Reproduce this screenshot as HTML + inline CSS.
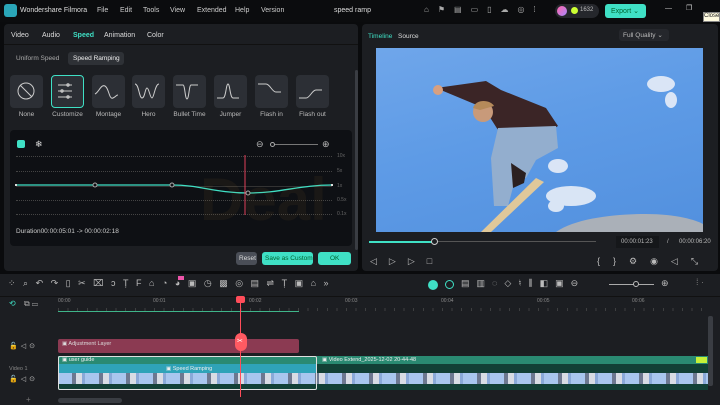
<!DOCTYPE html>
<html><head><meta charset="utf-8"><style>
*{box-sizing:border-box;margin:0;padding:0}
body{width:720px;height:405px;overflow:hidden;background:#0a0b0d;font-family:"Liberation Sans",sans-serif;color:#ddd;font-size:7px;position:relative}
.a{position:absolute}
.t{position:absolute;white-space:nowrap}
.tile{position:absolute;top:75px;width:33px;height:33px;background:#2c2f35;border-radius:4px}
.lbl{position:absolute;top:111px;width:41px;text-align:center;font-size:6.5px;color:#bbb}
.gl{position:absolute;left:16px;width:316px;border-top:1px dotted #444}
</style></head><body>
<!-- title bar -->
<div class="a" style="left:0;top:0;width:720px;height:22px;background:#0b0c0e"></div>
<div class="a" style="left:4px;top:4px;width:13px;height:13px;background:#2aa6b8;border-radius:3px"></div>
<div class="t" style="left:20px;top:7px;color:#ddd">Wondershare Filmora</div>
<div class="t" style="left:97px;top:7px;color:#ccc">File</div>
<div class="t" style="left:120px;top:7px;color:#ccc">Edit</div>
<div class="t" style="left:143px;top:7px;color:#ccc">Tools</div>
<div class="t" style="left:170px;top:7px;color:#ccc">View</div>
<div class="t" style="left:197px;top:7px;color:#ccc">Extended</div>
<div class="t" style="left:235px;top:7px;color:#ccc">Help</div>
<div class="t" style="left:261px;top:7px;color:#ccc">Version</div>
<div class="t" style="left:334px;top:7px;color:#ddd">speed ramp</div>
<div class="a" style="left:555px;top:4px;width:44px;height:14px;background:#25272c;border-radius:7px"></div>
<div class="a" style="left:557px;top:6px;width:10px;height:10px;background:linear-gradient(135deg,#f6a,#a8f);border-radius:50%"></div>
<div class="a" style="left:571px;top:7px;width:7px;height:7px;background:#cf3;border-radius:50%"></div>
<div class="t" style="left:580px;top:7px;font-size:6px;color:#bbb">1632</div>
<div class="a" style="left:605px;top:4px;width:41px;height:14px;background:#3fe0c5;border-radius:3px"></div>
<div class="t" style="left:611px;top:7px;color:#063;font-size:7px">Export  ⌄</div>
<div class="t" style="left:665px;top:5px;color:#ccc">—</div>
<div class="t" style="left:686px;top:4px;color:#ccc">❐</div>
<div class="a" style="left:703px;top:12px;width:17px;height:10px;background:#fffbe0;border:1px solid #888"></div>
<div class="t" style="left:704px;top:13px;color:#222;font-size:6px">Close</div>
<div class="t" style="left:424px;top:5px;color:#aaa;font-size:8px;letter-spacing:9px">⌂⚑▤▭▯☁◎⁞</div>

<!-- left panel -->
<div class="a" style="left:4px;top:24px;width:354px;height:247px;background:#1c1e22;border-radius:4px"></div>
<div class="a" style="left:4px;top:44px;width:354px;height:1px;background:#111"></div>
<div class="t" style="left:11px;top:32px;color:#ddd">Video</div>
<div class="t" style="left:42px;top:32px;color:#ddd">Audio</div>
<div class="t" style="left:73px;top:32px;color:#3fe0c5;font-weight:bold">Speed</div>
<div class="t" style="left:104px;top:32px;color:#ddd">Animation</div>
<div class="t" style="left:147px;top:32px;color:#ddd">Color</div>
<div class="t" style="left:16px;top:55px;color:#aaa;font-size:6.5px">Uniform Speed</div>
<div class="a" style="left:68px;top:52px;width:56px;height:13px;background:#2e3136;border-radius:3px"></div>
<div class="t" style="left:73px;top:55px;color:#eee;font-size:6.5px">Speed Ramping</div>
<div class="tile" style="left:10px"></div><div class="tile" style="left:51px;border:1px solid #3fe0c5"></div>
<div class="tile" style="left:92px"></div><div class="tile" style="left:132px"></div><div class="tile" style="left:173px"></div>
<div class="tile" style="left:214px"></div><div class="tile" style="left:255px"></div><div class="tile" style="left:296px"></div>
<svg class="a" style="left:0;top:70px" width="360" height="45" fill="none" stroke="#ccc" stroke-width="1">
<circle cx="26" cy="21" r="8"/><line x1="20" y1="15" x2="32" y2="27"/>
<path d="M58 15h14M58 21h14M58 27h14"/><circle cx="68" cy="15" r="1.2"/><circle cx="62" cy="21" r="1.2"/><circle cx="68" cy="27" r="1.2"/>
<path d="M95 24c4-2 6-10 10-8s4 14 8 12 3-3 5-3"/>
<path d="M135 14c4 0 4 14 7 14s3-10 5-10 3 10 5 10 3-14 7-14"/>
<path d="M176 15h7c2 0 2 14 4 14s2-14 4-14h7"/>
<path d="M217 28h6c3 0 3-14 5-14s2 14 5 14h6"/>
<path d="M258 14h8c4 0 6 8 10 8h5"/>
<path d="M299 28h7c4 0 6-8 10-8h6"/>
</svg>
<div class="lbl" style="left:6px">None</div><div class="lbl" style="left:47px">Customize</div><div class="lbl" style="left:88px">Montage</div><div class="lbl" style="left:128px">Hero</div><div class="lbl" style="left:169px">Bullet Time</div><div class="lbl" style="left:210px">Jumper</div><div class="lbl" style="left:251px">Flash in</div><div class="lbl" style="left:292px">Flash out</div>
<div class="a" style="left:355px;top:70px;width:3px;height:180px;background:#3a3d43;border-radius:2px"></div>

<!-- graph -->
<div class="a" style="left:10px;top:130px;width:342px;height:116px;background:#0e1014;border-radius:4px"></div>
<div class="a" style="left:17px;top:140px;width:8px;height:8px;background:#3fe0c5;border-radius:2px"></div>
<div class="t" style="left:35px;top:139px;color:#ddd;font-size:9px">❄</div>
<div class="t" style="left:256px;top:139px;color:#bbb;font-size:9px">⊖</div>
<div class="a" style="left:272px;top:144px;width:46px;height:1px;background:#777"></div>
<div class="a" style="left:270px;top:142px;width:5px;height:5px;border:1px solid #aaa;border-radius:50%;background:#0e1014"></div>
<div class="t" style="left:322px;top:139px;color:#bbb;font-size:9px">⊕</div>
<div class="gl" style="top:156px"></div><div class="gl" style="top:171px"></div><div class="gl" style="top:186px;border-top:1px solid #333"></div><div class="gl" style="top:200px"></div><div class="gl" style="top:214px"></div>
<div class="t" style="left:337px;top:153px;font-size:5px;color:#666">10x</div>
<div class="t" style="left:337px;top:168px;font-size:5px;color:#666">5x</div>
<div class="t" style="left:337px;top:183px;font-size:5px;color:#666">1x</div>
<div class="t" style="left:337px;top:197px;font-size:5px;color:#666">0.5x</div>
<div class="t" style="left:337px;top:211px;font-size:5px;color:#666">0.1x</div>
<svg class="a" style="left:0;top:130px" width="360" height="100" fill="#0e1014">
<path d="M16 55H172C200 55 215 63 248 63S300 55 332 55" stroke="#3fe0c5" stroke-width="1.3" fill="none"/>
<line x1="245" y1="25" x2="245" y2="85" stroke="#e0405a" stroke-width="1"/>
<circle cx="95" cy="55" r="2" stroke="#aaa"/><circle cx="172" cy="55" r="2" stroke="#aaa"/><circle cx="248" cy="63" r="2" stroke="#aaa"/>
<rect x="15" y="54" width="2" height="2" fill="#ddd"/><rect x="331" y="54" width="2" height="2" fill="#ddd"/>
</svg>
<div class="t" style="left:200px;top:165px;font-size:60px;font-weight:bold;color:rgba(150,110,40,.09)">Deal</div>
<div class="t" style="left:16px;top:228px;color:#ccc;font-size:6.5px">Duration00:00:05:01 -&gt; 00:00:02:18</div>
<div class="a" style="left:236px;top:252px;width:21px;height:13px;background:#4a4e57;border-radius:3px"></div>
<div class="t" style="left:239px;top:255px;font-size:6.5px;color:#ddd">Reset</div>
<div class="a" style="left:262px;top:252px;width:51px;height:13px;background:#3fe0c5;border-radius:3px"></div>
<div class="t" style="left:265px;top:255px;font-size:6.5px;color:#063">Save as Custom</div>
<div class="a" style="left:318px;top:252px;width:33px;height:13px;background:#3fe0c5;border-radius:3px"></div>
<div class="t" style="left:330px;top:255px;font-size:6.5px;color:#063">OK</div>

<!-- right panel -->
<div class="a" style="left:362px;top:24px;width:356px;height:247px;background:#1c1e22;border-radius:4px"></div>
<div class="t" style="left:368px;top:33px;color:#3fe0c5;font-size:6.5px">Timeline</div>
<div class="t" style="left:398px;top:33px;color:#ddd;font-size:6.5px">Source</div>
<div class="a" style="left:619px;top:29px;width:50px;height:12px;background:#25272c;border-radius:3px"></div>
<div class="t" style="left:623px;top:31px;color:#bbb;font-size:6.5px">Full Quality ⌄</div>
<div class="a" style="left:376px;top:48px;width:327px;height:184px;background:linear-gradient(165deg,#6fa6ea 0%,#5e9be6 45%,#5290de 100%)"></div>
<svg class="a" style="left:376px;top:48px" width="327" height="184">
<path d="M180 184C200 170 240 166 270 166S320 172 327 176V184Z" fill="#aab0b8"/>
<g fill="#e8eef8" opacity=".9"><ellipse cx="285" cy="36" rx="14" ry="8"/><ellipse cx="295" cy="52" rx="6" ry="8"/><ellipse cx="195" cy="148" rx="25" ry="10"/><ellipse cx="180" cy="158" rx="8" ry="6"/><ellipse cx="182" cy="118" rx="10" ry="7"/></g>
<path d="M60 40L110 33L125 42L170 60L182 78L175 82L122 82L108 60Z" fill="#3b2526"/>
<path d="M122 80L180 78L182 100L160 112L150 130L140 128L132 158L118 158L115 110Z" fill="#93aece"/>
<path d="M135 115L150 125L148 135L137 140Z" fill="#2b2020"/>
<circle cx="107" cy="64" r="10" fill="#c89a7a"/>
<path d="M97 60C100 50 115 52 118 58L104 62Z" fill="#b58a5a"/>
<circle cx="62" cy="42" r="5" fill="#d8a080"/>
<path d="M105 184L160 130L168 134L115 184Z" fill="#e0c89a"/>
</svg>
<div class="a" style="left:369px;top:241px;width:66px;height:2px;background:#3fe0c5"></div>
<div class="a" style="left:435px;top:241px;width:161px;height:1px;background:#555"></div>
<div class="a" style="left:431px;top:238px;width:7px;height:7px;border:1px solid #ccc;border-radius:50%;background:#1c1e22"></div>
<div class="a" style="left:616px;top:236px;width:43px;height:12px;background:#15171a"></div>
<div class="t" style="left:621px;top:239px;font-size:6px;color:#bbb">00:00:01:23</div>
<div class="t" style="left:667px;top:239px;font-size:6px;color:#bbb">/</div>
<div class="t" style="left:679px;top:239px;font-size:6px;color:#bbb">00:00:06:20</div>
<div class="t" style="left:370px;top:256px;font-size:9px;color:#bbb;letter-spacing:12px">◁▷▷□</div>
<div class="t" style="left:597px;top:256px;font-size:9px;color:#bbb;letter-spacing:13px">{}⚙◉◁⤡</div>

<!-- timeline -->
<div class="a" style="left:0;top:274px;width:720px;height:131px;background:#1c1e22"></div>
<div class="a" style="left:0;top:296px;width:720px;height:1px;background:#111"></div>
<div class="t" style="left:8px;top:278px;font-size:9px;color:#bbb;letter-spacing:7.5px">⁘⌕↶↷▯✂⌧ↄȚF⌂◔◕▣◷▩◎▤⇌Ț▣⌂»</div>
<div class="a" style="left:178px;top:276px;width:6px;height:4px;background:#e5a"></div>
<div class="a" style="left:428px;top:280px;width:10px;height:10px;border-radius:50%;background:#3fe0c5"></div>
<div class="a" style="left:445px;top:280px;width:9px;height:9px;border-radius:50%;border:1px solid #3fe0c5"></div>
<div class="t" style="left:461px;top:278px;font-size:9px;color:#bbb;letter-spacing:7px">▤▥◌◇♮⫼◧▣⊖</div>
<div class="a" style="left:609px;top:284px;width:45px;height:1px;background:#aaa"></div>
<div class="a" style="left:633px;top:281px;width:6px;height:6px;border:1px solid #bbb;border-radius:50%;background:#1c1e22"></div>
<div class="t" style="left:661px;top:278px;font-size:9px;color:#bbb">⊕</div>
<div class="t" style="left:696px;top:277px;font-size:9px;color:#777">⁞ ·</div>
<div class="t" style="left:9px;top:299px;font-size:8px;color:#3fe0c5">⟲</div>
<div class="t" style="left:24px;top:299px;font-size:8px;color:#aaa">⧉ ▭</div>
<div class="a" style="left:58px;top:297px;width:650px;height:16px;background:repeating-linear-gradient(90deg,#555 0 1px,transparent 1px 9.6px);opacity:.6;clip-path:inset(11px 0 2px 0)"></div>
<div class="t" style="left:58px;top:298px;font-size:5px;color:#888">00:00</div>
<div class="t" style="left:153px;top:298px;font-size:5px;color:#888">00:01</div>
<div class="t" style="left:249px;top:298px;font-size:5px;color:#888">00:02</div>
<div class="t" style="left:345px;top:298px;font-size:5px;color:#888">00:03</div>
<div class="t" style="left:441px;top:298px;font-size:5px;color:#888">00:04</div>
<div class="t" style="left:537px;top:298px;font-size:5px;color:#888">00:05</div>
<div class="t" style="left:632px;top:298px;font-size:5px;color:#888">00:06</div>
<div class="a" style="left:58px;top:311px;width:241px;height:1px;background:#3fb58a"></div>
<div class="a" style="left:708px;top:316px;width:5px;height:70px;background:#3a3d43;border-radius:2px"></div>
<div class="a" style="left:58px;top:339px;width:241px;height:14px;background:#8b3a52;border-radius:2px"></div>
<div class="t" style="left:62px;top:341px;font-size:5.5px;color:#ddd">▣ Adjustment Layer</div>
<div class="t" style="left:9px;top:342px;font-size:7px;color:#bbb;letter-spacing:3px">🔓◁⊙</div>
<div class="t" style="left:9px;top:366px;font-size:5.5px;color:#888">Video 1</div>
<div class="t" style="left:9px;top:375px;font-size:7px;color:#bbb;letter-spacing:3px">🔓◁⊙</div>
<div class="a" style="left:58px;top:356px;width:650px;height:34px;background:#124036"></div>
<div class="a" style="left:58px;top:356px;width:650px;height:8px;background:#2a8a72"></div>
<div class="a" style="left:58px;top:364px;width:259px;height:9px;background:#2fa3b8"></div>
<div class="a" style="left:58px;top:373px;width:650px;height:11px;background:repeating-linear-gradient(90deg,#a9c6ee 0 14px,#6d7890 14px 18px,#d8dce4 18px 24px,#8aa9d8 24px 27px)"></div>
<div class="a" style="left:58px;top:356px;width:259px;height:34px;border:1px solid #e0e0e0;border-radius:2px"></div>
<div class="t" style="left:62px;top:357px;font-size:5.5px;color:#eee">▣ user guide</div>
<div class="t" style="left:166px;top:366px;font-size:5.5px;color:#eee">▣ Speed Ramping</div>
<div class="t" style="left:322px;top:357px;font-size:5.5px;color:#eee">▣ Video Extend_2025-12-02 20-44-48</div>
<div class="a" style="left:696px;top:357px;width:11px;height:6px;background:#c6f038"></div>
<div class="a" style="left:240px;top:297px;width:1px;height:100px;background:#ff4d5a"></div>
<div class="a" style="left:236px;top:296px;width:9px;height:7px;background:#ff4d5a;border-radius:2px"></div>
<div class="a" style="left:235px;top:333px;width:12px;height:18px;background:#ff5a62;border-radius:6px"></div>
<div class="t" style="left:237px;top:337px;font-size:7px;color:#fff">✂</div>
<div class="t" style="left:26px;top:395px;font-size:8px;color:#777">+</div>
<div class="a" style="left:58px;top:398px;width:64px;height:5px;background:#3a3d43;border-radius:3px"></div>
</body></html>
